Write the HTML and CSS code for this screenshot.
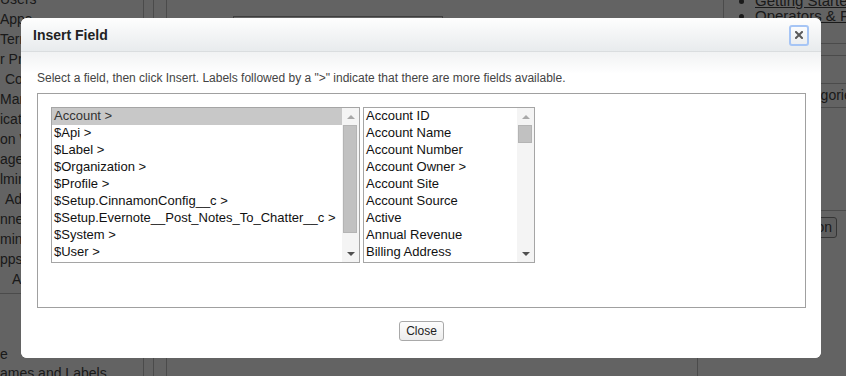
FILE: index.html
```html
<!DOCTYPE html>
<html lang="en">
<head>
  <meta charset="UTF-8" />
  <meta name="viewport" content="width=device-width, initial-scale=1.0" />
  <title>Insert Field</title>
  <link rel="stylesheet" href="styles.css">
</head>
<body>

  <div class="page">
    <div class="sidebar">
      <ul class="nav">
        <li>Users</li>
        <li>Apps</li>
        <li>Territories</li>
        <li>r Profiles</li>
        <li class="indent">Contacts</li>
        <li>Manage</li>
        <li>ications</li>
        <li>on Workflow</li>
        <li>ages</li>
        <li>lministration</li>
        <li class="indent">Administration</li>
        <li>nnected Apps</li>
        <li>ministration</li>
        <li>pps</li>
        <li class="indent-more">Admin</li>
      </ul>
      <ul class="nav nav-low">
        <li>e</li>
        <li>ames and Labels</li>
      </ul>
    </div>
    <div class="gutter"></div>
    <div class="gutter gutter-wide"></div>

    <div class="main">
      <div class="example-row">
        <span class="example-label">Example:</span>
        <span class="example-input">{!Ticket.Incident_Id__c} {!Subject}</span>
        <span class="example-link">Use Example</span>
      </div>
    </div>

    <div class="aside">
      <div class="help">
        <ul class="help-links">
          <li>Getting Started</li>
          <li>Operators &amp; Functions</li>
        </ul>
      </div>
      <div class="fn-head"></div>
      <div class="fn-cat">
        <div class="fn-select">All Function Categories</div>
      </div>
      <div class="fn-list"></div>
      <div class="fn-actions">
        <span class="page-btn">Insert Selected Function</span>
      </div>
    </div>
  </div>

  <div class="overlay"></div>

  <div class="modal">
    <div class="modal-header">
      <h2 class="modal-title">Insert Field</h2>
      <button class="icon-btn" title="Close">
        <svg viewBox="0 0 8 8" width="8" height="8">
          <path d="M1 1L7 7M7 1L1 7" stroke="#5a5a5a" stroke-width="2" stroke-linecap="square"/>
        </svg>
      </button>
    </div>

    <div class="modal-body">
      <p class="hint">Select a field, then click Insert. Labels followed by a "&gt;" indicate that there are more fields available.</p>

      <div class="picker">
        <div class="listbox listbox-fields">
          <ul class="options">
            <li class="selected">Account &gt;</li>
            <li>$Api &gt;</li>
            <li>$Label &gt;</li>
            <li>$Organization &gt;</li>
            <li>$Profile &gt;</li>
            <li>$Setup.CinnamonConfig__c &gt;</li>
            <li>$Setup.Evernote__Post_Notes_To_Chatter__c &gt;</li>
            <li>$System &gt;</li>
            <li>$User &gt;</li>
          </ul>
          <div class="scrollbar">
            <span class="arrow arrow-up"></span>
            <div class="track"><div class="thumb thumb-long"></div></div>
            <span class="arrow arrow-down"></span>
          </div>
        </div>

        <div class="listbox listbox-sub">
          <ul class="options">
            <li>Account ID</li>
            <li>Account Name</li>
            <li>Account Number</li>
            <li>Account Owner &gt;</li>
            <li>Account Site</li>
            <li>Account Source</li>
            <li>Active</li>
            <li>Annual Revenue</li>
            <li>Billing Address</li>
          </ul>
          <div class="scrollbar">
            <span class="arrow arrow-up"></span>
            <div class="track"><div class="thumb thumb-short"></div></div>
            <span class="arrow arrow-down"></span>
          </div>
        </div>
      </div>

      <div class="modal-footer">
        <button class="btn">Close</button>
      </div>
    </div>
  </div>

</body>
</html>
```

FILE: styles.css
```css
* {
  box-sizing: border-box;
}

body {
  margin: 0;
  width: 846px;
  height: 376px;
  overflow: hidden;
  background: #fff;
  color: #444;
  font-family: "Liberation Sans", Arial, sans-serif;
}

/* page behind the dialog */

.page {
  display: flex;
  height: 376px;
  font-size: 14px;
}

.sidebar {
  width: 144px;
  flex-shrink: 0;
  border-right: 1px solid #c0c0c0;
  overflow: hidden;
}

.nav {
  list-style: none;
  margin: -11px 0 0;
  padding: 0;
  line-height: 20px;
  white-space: nowrap;
}

.nav .indent { padding-left: 5px; }
.nav .indent-more { padding-left: 12px; }

.nav-low {
  margin-top: 4px;
  padding-top: 51px;
  border-top: 1px solid #c0c0c0;
  line-height: 19px;
}

.gutter {
  width: 10px;
  flex-shrink: 0;
  border-right: 1px solid #c0c0c0;
}

.gutter-wide { width: 13px; }

.main {
  width: 530px;
  flex-shrink: 0;
  padding: 16px 0 0 0;
}

.example-row {
  display: flex;
  align-items: flex-start;
  gap: 8px;
  white-space: nowrap;
}

.example-label {
  font-weight: bold;
  width: 58px;
}

.example-input {
  width: 210px;
  height: 22px;
  padding: 2px 4px;
  border: 1px solid #a0a0a0;
  font-size: 13px;
  overflow: hidden;
}

.aside {
  width: 149px;
  flex-shrink: 0;
}

.help {
  height: 44px;
  margin-left: 26px;
  border-left: 1px solid #c0c0c0;
  border-bottom: 1px solid #c0c0c0;
  overflow: hidden;
}

.help-links {
  margin: -7px 0 0;
  padding-left: 31px;
  line-height: 15px;
  font-size: 15px;
  white-space: nowrap;
}

.help-links li { text-decoration: underline; }

.fn-head {
  height: 12px;
  border-bottom: 1px solid #c0c0c0;
}

.fn-cat {
  padding: 27px 0 0 12px;
}

.fn-select {
  height: 25px;
  padding-left: 5px;
  line-height: 23px;
  border-top: 1px solid #c0c0c0;
  border-bottom: 1px solid #c0c0c0;
  white-space: nowrap;
}

.fn-list {
  height: 103px;
  border-bottom: 1px solid #c0c0c0;
}

.fn-actions {
  height: 165px;
  display: flex;
  justify-content: flex-end;
  align-items: flex-start;
  padding: 6px 9px 0 0;
  border-left: 1px solid #c0c0c0;
}

.page-btn {
  flex-shrink: 0;
  height: 21px;
  padding: 0 4px;
  line-height: 19px;
  border: 1px solid #8a8a8a;
  border-radius: 3px;
  background: #f3f3f3;
  white-space: nowrap;
}

.overlay {
  position: fixed;
  inset: 0;
  background: rgba(0, 0, 0, 0.61);
}

/* dialog */

.modal {
  position: absolute;
  left: 21px;
  top: 18px;
  width: 800px;
  height: 340px;
  background: #fff;
  border-radius: 6px;
  overflow: hidden;
}

.modal-header {
  height: 34px;
  display: flex;
  align-items: center;
  justify-content: space-between;
  padding: 0 12px;
  background: linear-gradient(#fefefe, #e8ebed);
  border-bottom: 1px solid #dadddf;
}

.modal-title {
  margin: 0;
  font-size: 14px;
  font-weight: bold;
  color: #222;
}

.icon-btn {
  width: 20px;
  height: 21px;
  margin-top: 1px;
  padding: 0;
  display: flex;
  align-items: center;
  justify-content: center;
  border: 2px solid #a6c5f5;
  border-radius: 3px;
  background: linear-gradient(#fbfcfd, #eceef0);
  cursor: pointer;
}

.modal-body {
  height: 306px;
  padding: 18px 15px 0 16px;
  background: linear-gradient(#f1f2f3, #fff 22px);
}

.hint {
  margin: 0 0 7px;
  font-size: 12px;
  line-height: 16px;
  color: #444;
  white-space: nowrap;
}

.picker {
  height: 215px;
  display: flex;
  align-items: flex-start;
  gap: 3px;
  padding: 13px;
  border: 1px solid #a0a0a0;
}

.listbox {
  display: flex;
  height: 156px;
  border: 1px solid #a5a5a5;
  background: #fff;
}

.listbox-fields { width: 309px; }
.listbox-sub { width: 172px; }

.options {
  flex: 1;
  margin: 0;
  padding: 0;
  list-style: none;
  overflow: hidden;
  font-size: 13px;
  line-height: 16px;
  color: #111;
}

.options li {
  height: 17px;
  padding-left: 2px;
  padding-bottom: 1px;
  white-space: nowrap;
}

.options .selected { background: #c8c8c8; color: #333; }

.scrollbar {
  width: 17px;
  display: flex;
  flex-direction: column;
  background: #f4f4f4;
}

.arrow {
  height: 17px;
  display: flex;
  align-items: center;
  justify-content: center;
}

.arrow::before {
  content: '';
  border-left: 4px solid transparent;
  border-right: 4px solid transparent;
}

.arrow-up::before { border-bottom: 4px solid #a8a8a8; }
.arrow-down::before { border-top: 4px solid #505050; }

.track {
  flex: 1;
  padding: 0 2px 0 1px;
}

.thumb {
  background: #c1c1c1;
  border: 1px solid #b4b4b4;
}

.thumb-long { height: 108px; }
.thumb-short { height: 18px; }

.modal-footer {
  display: flex;
  justify-content: center;
  padding-top: 13px;
}

.btn {
  height: 20px;
  padding: 0 6px;
  font-family: inherit;
  font-size: 12px;
  color: #222;
  border: 1px solid #a9a9a9;
  border-radius: 3px;
  background: linear-gradient(#fdfdfd, #ececec);
  cursor: pointer;
}
```
